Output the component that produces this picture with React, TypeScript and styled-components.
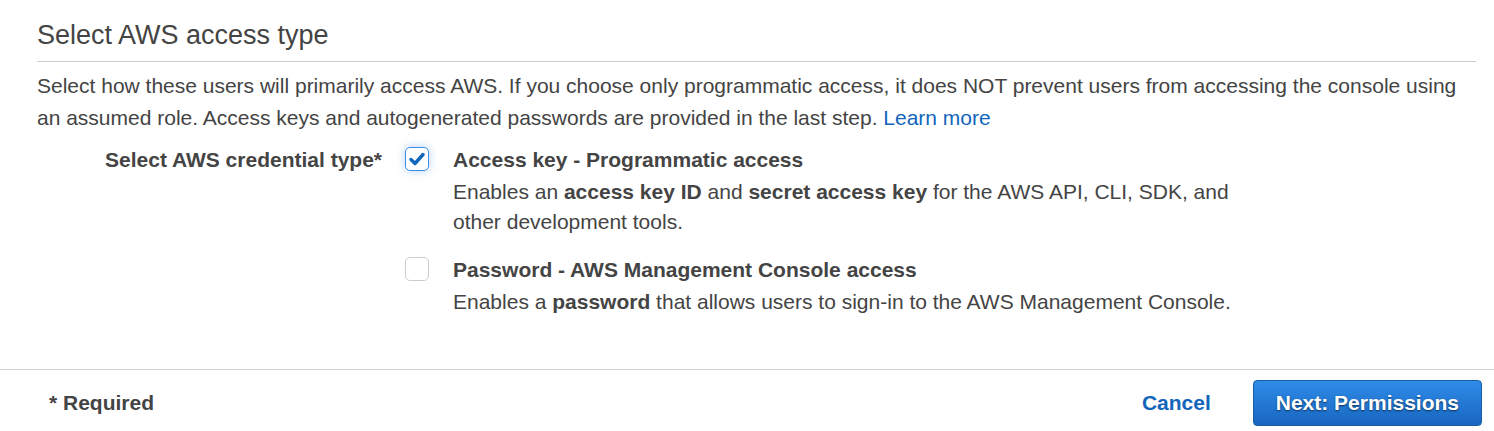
import React from 'react';
import styled, { createGlobalStyle } from 'styled-components';

const GlobalStyle = createGlobalStyle`
  body {
    margin: 0;
    background: #fff;
    font-family: 'Liberation Sans', Arial, sans-serif;
    color: #444;
  }
`;

const Section = styled.section`
  padding: 17px 18px 0 37px;
`;

const Title = styled.h2`
  margin: 0;
  font-size: 27px;
  font-weight: normal;
  line-height: 36px;
  color: #444;
  padding-bottom: 8px;
  border-bottom: 1px solid #ccc;
`;

const Intro = styled.p`
  margin: 8px 0 0;
  font-size: 21px;
  line-height: 32px;
`;

const Link = styled.a`
  color: #1166bb;
  text-decoration: none;
  cursor: pointer;
`;

const FieldRow = styled.div`
  display: flex;
  align-items: flex-start;
  margin-top: 11px;
  padding-bottom: 52px;
`;

const FieldLabel = styled.div`
  width: 345px;
  text-align: right;
  font-size: 21px;
  font-weight: bold;
  line-height: 30px;
`;

const Options = styled.div`
  display: flex;
  flex-direction: column;
  gap: 18px;
  margin-left: 23px;
`;

const Option = styled.label`
  display: flex;
  align-items: flex-start;
  gap: 24px;
`;

const Box = styled.span<{ $checked: boolean }>`
  flex: none;
  width: 24px;
  height: 24px;
  margin-top: 2px;
  box-sizing: border-box;
  border-radius: 5px;
  border: 1px solid ${p => (p.$checked ? '#3a8ee6' : '#ccc')};
  box-shadow: ${p => (p.$checked ? '0 0 8px rgba(40, 120, 220, 0.35)' : 'none')};
  background: #fff;
  display: flex;
  align-items: center;
  justify-content: center;
`;

const OptionText = styled.div`
  max-width: 792px;
  font-size: 21px;
`;

const OptionTitle = styled.div`
  font-weight: bold;
  line-height: 30px;
  margin-bottom: 2px;
`;

const OptionDesc = styled.div`
  line-height: 30px;
`;

const Footer = styled.footer`
  border-top: 1px solid #d5d5d5;
  display: flex;
  align-items: center;
  padding: 10px 12px 4px 49px;
`;

const Required = styled.div`
  flex: 1;
  font-size: 21px;
  font-weight: bold;
`;

const CancelLink = styled.a`
  color: #1166bb;
  font-size: 21px;
  font-weight: bold;
  margin-right: 42px;
  cursor: pointer;
`;

const PrimaryButton = styled.button`
  height: 46px;
  padding: 0 22px;
  border: 1px solid #1a5da6;
  border-radius: 4px;
  background: linear-gradient(#2f8ce8, #1866c0);
  color: #fff;
  font-family: 'Liberation Sans', Arial, sans-serif;
  font-size: 21px;
  font-weight: bold;
  text-shadow: 0 1px 2px rgba(0, 0, 0, 0.6);
  cursor: pointer;
`;

function Check() {
  return (
    <svg width="16" height="14" viewBox="0 0 16 14">
      <path d="M2 7.5 L6 11.5 L14 2.5" fill="none" stroke="#1166bb" strokeWidth="3.4" strokeLinecap="round" strokeLinejoin="round" />
    </svg>
  );
}

type CredentialOption = {
  checked: boolean;
  title: string;
  desc: React.ReactNode;
};

const options: CredentialOption[] = [
  {
    checked: true,
    title: 'Access key - Programmatic access',
    desc: (
      <>
        Enables an <b>access key ID</b> and <b>secret access key</b> for the AWS API, CLI, SDK, and other development tools.
      </>
    ),
  },
  {
    checked: false,
    title: 'Password - AWS Management Console access',
    desc: (
      <>
        Enables a <b>password</b> that allows users to sign-in to the AWS Management Console.
      </>
    ),
  },
];

export default function App() {
  return (
    <>
      <GlobalStyle />
      <Section>
        <Title>Select AWS access type</Title>
        <Intro>
          Select how these users will primarily access AWS. If you choose only programmatic access, it does NOT prevent users
          from accessing the console using an assumed role. Access keys and autogenerated passwords are provided in the last
          step. <Link>Learn more</Link>
        </Intro>
        <FieldRow>
          <FieldLabel>Select AWS credential type*</FieldLabel>
          <Options>
            {options.map(o => (
              <Option key={o.title}>
                <Box $checked={o.checked}>{o.checked && <Check />}</Box>
                <OptionText>
                  <OptionTitle>{o.title}</OptionTitle>
                  <OptionDesc>{o.desc}</OptionDesc>
                </OptionText>
              </Option>
            ))}
          </Options>
        </FieldRow>
      </Section>
      <Footer>
        <Required>* Required</Required>
        <CancelLink>Cancel</CancelLink>
        <PrimaryButton>Next: Permissions</PrimaryButton>
      </Footer>
    </>
  );
}
